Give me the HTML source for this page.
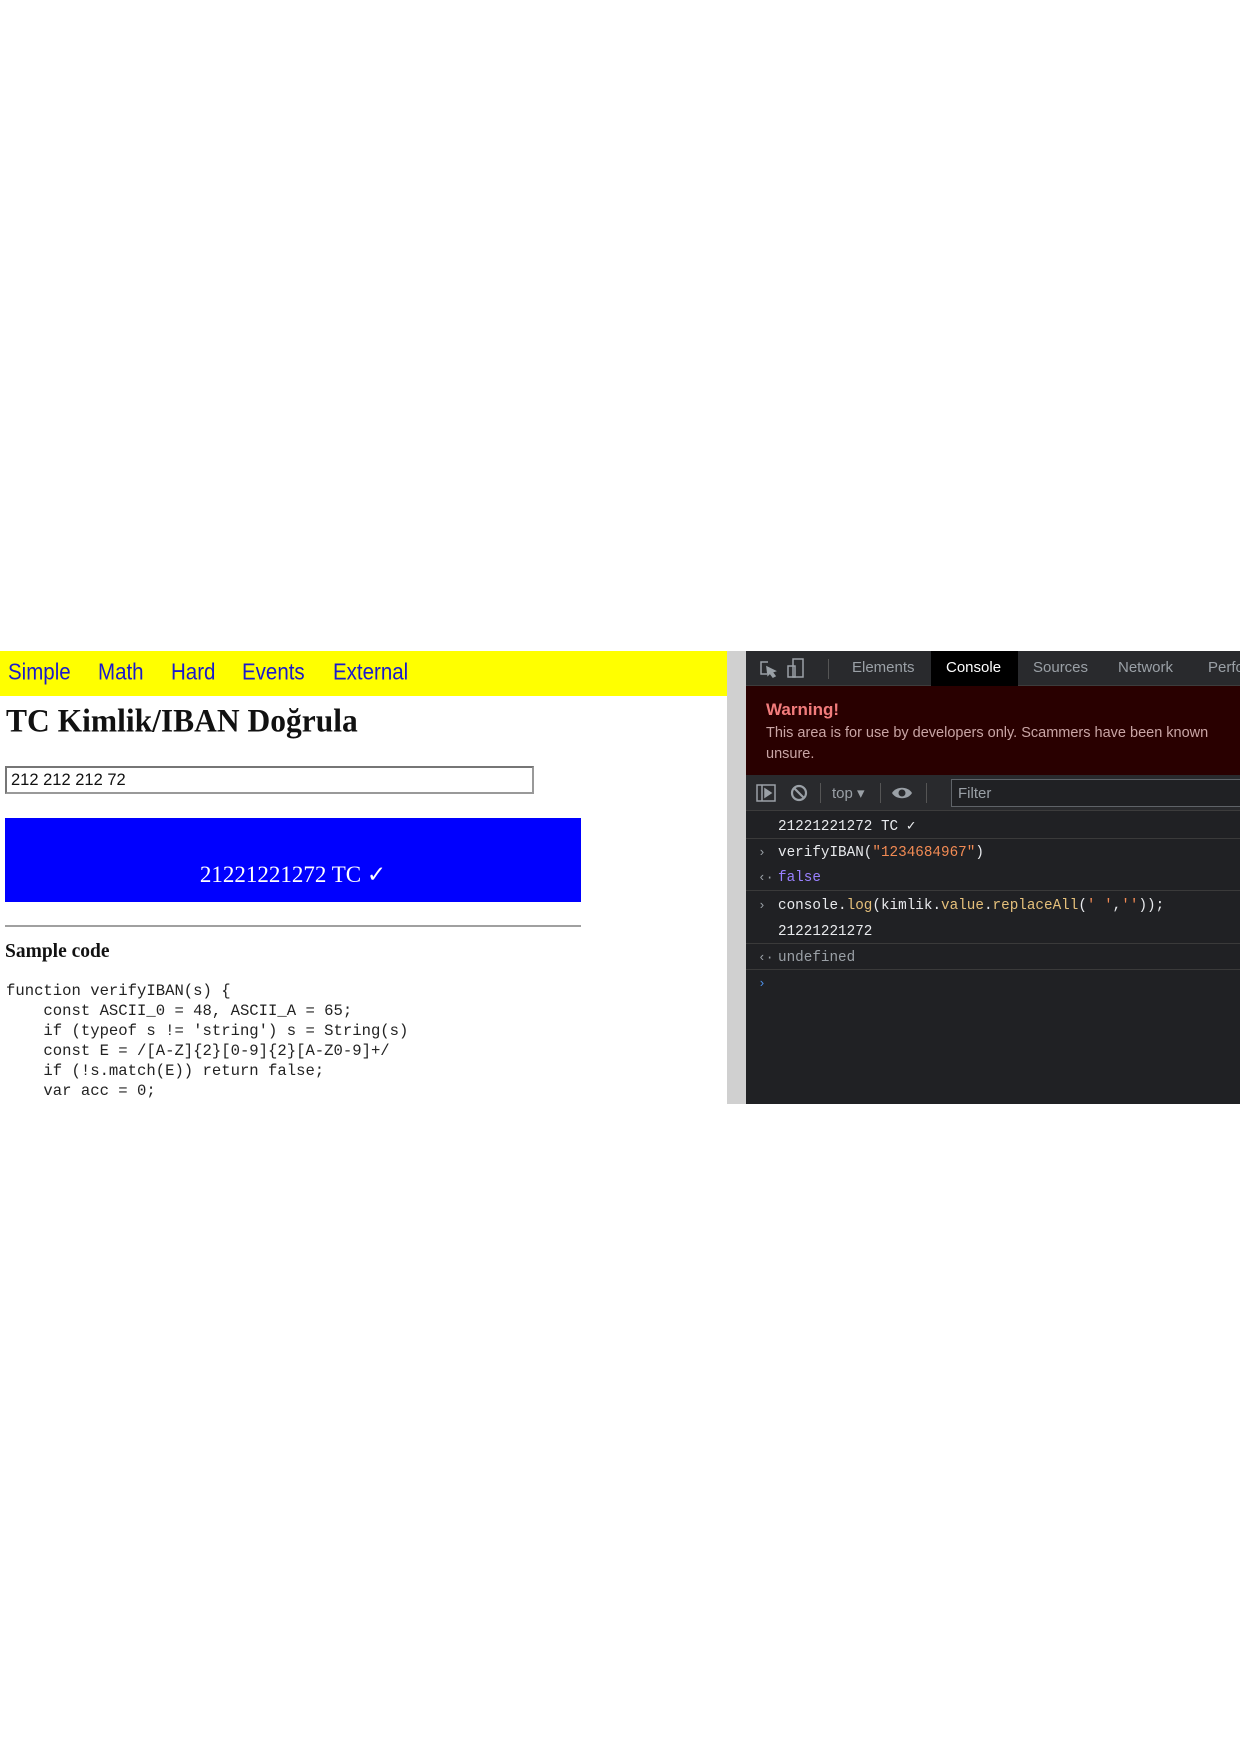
<!DOCTYPE html>
<html><head><meta charset="utf-8"><style>
*{margin:0;padding:0;box-sizing:border-box}
body{width:1240px;height:1755px;background:#fff;position:relative;overflow:hidden;font-family:"Liberation Sans",sans-serif}
.a{position:absolute;white-space:nowrap}
.nav{left:0;top:651px;width:727px;height:45px;background:#ffff00}
.nav span{position:absolute;top:10px;color:#1a1acc;font-size:20.5px;transform:scaleY(1.12)}
.mono{font-family:"Liberation Mono",monospace}
.code{left:6px;top:981px;font-size:15.6px;line-height:20px;color:#222;height:122px;overflow:hidden}
.dt{left:746px;top:651px;width:494px;height:453px;background:#202124;overflow:hidden}
.tabs{position:absolute;left:0;top:0;width:494px;height:35px;background:#292a2d;border-bottom:1px solid #3c3c3c}
.tabs span{position:absolute;top:8px;font-size:15px;color:#9aa0a6}
.warn{position:absolute;left:0;top:35px;width:494px;height:89px;background:#290000}
.tb{position:absolute;left:0;top:124px;width:494px;height:36px;background:#292a2d;border-bottom:1px solid #3c3c3c}
.row{position:absolute;left:0;width:494px;border-bottom:1px solid #3a3a3a;font-size:14.3px;color:#e8eaed}
.row .t{position:absolute;left:32px}
.row .g{position:absolute;left:12px;color:#9aa0a6;font-size:13px}
</style></head><body>
<div class="a nav"><span style="left:8px">Simple</span><span style="left:98px">Math</span><span style="left:171px">Hard</span><span style="left:242px">Events</span><span style="left:333px">External</span></div>
<div class="a" style="left:727px;top:651px;width:19px;height:453px;background:#d0d0d0"></div>
<div class="a" style="left:6px;top:702px;font:bold 31.5px 'Liberation Serif',serif;color:#111;transform:scaleY(1.05);transform-origin:left top">TC Kimlik/IBAN Doğrula</div>
<div class="a" style="left:5px;top:766px;width:529px;height:28px;border:2px solid #767676;border-right-color:#999;border-bottom-color:#999;font-size:16.5px;padding:3px 0 0 4px;color:#111">212 212 212 72</div>
<div class="a" style="left:5px;top:818px;width:576px;height:84px;background:#0000ff;color:#fff;font:23px 'Liberation Serif',serif;text-align:center;padding-top:44px">21221221272 TC ✓</div>
<div class="a" style="left:5px;top:925px;width:576px;height:2px;background:#a0a0a0"></div>
<div class="a" style="left:5px;top:941px;font:bold 19.5px 'Liberation Serif',serif;color:#111">Sample code</div>
<div class="a mono code">function verifyIBAN(s) {
<br>&nbsp;&nbsp;&nbsp;&nbsp;const ASCII_0 = 48, ASCII_A = 65;
<br>&nbsp;&nbsp;&nbsp;&nbsp;if (typeof s != 'string') s = String(s)
<br>&nbsp;&nbsp;&nbsp;&nbsp;const E = /[A-Z]{2}[0-9]{2}[A-Z0-9]+/
<br>&nbsp;&nbsp;&nbsp;&nbsp;if (!s.match(E)) return false;
<br>&nbsp;&nbsp;&nbsp;&nbsp;var acc = 0;
<br>&nbsp;&nbsp;&nbsp;&nbsp;for (let c of s) {</div>
<div class="a dt">
 <div class="tabs">
  <svg style="position:absolute;left:12px;top:8px" width="20" height="20" viewBox="0 0 20 20" fill="none" stroke="#9aa0a6" stroke-width="1.5"><path d="M10 3H3v12h6"/><path d="M9 8l8 4-3 1 3 4-2 1-3-4-2 2z" fill="#9aa0a6"/></svg>
  <svg style="position:absolute;left:40px;top:6px" width="20" height="22" viewBox="0 0 20 22" fill="none" stroke="#9aa0a6" stroke-width="1.5"><rect x="7" y="2" width="10" height="18"/><rect x="2" y="9" width="7" height="11"/></svg>
  <div style="position:absolute;left:82px;top:8px;width:1px;height:20px;background:#555"></div>
  <span style="left:106px">Elements</span>
  <div style="position:absolute;left:185px;top:0;width:87px;height:35px;background:#000"></div>
  <span style="left:200px;color:#fff">Console</span>
  <span style="left:287px">Sources</span>
  <span style="left:372px">Network</span>
  <span style="left:462px">Perfo</span>
 </div>
 <div class="warn">
  <div class="a" style="left:20px;top:14px;font-weight:bold;font-size:17px;color:#f27c7c">Warning!</div>
  <div class="a" style="left:20px;top:39px;font-size:14.5px;color:#c9a5a5">This area is for use by developers only. Scammers have been known</div>
  <div class="a" style="left:20px;top:60px;font-size:14.5px;color:#c9a5a5">unsure.</div>
 </div>
 <div class="tb">
  <svg style="position:absolute;left:10px;top:9px" width="20" height="18" viewBox="0 0 20 18" fill="none" stroke="#9aa0a6" stroke-width="1.5"><rect x="1" y="1" width="18" height="16"/><path d="M6 1v16"/><path d="M9 5l6 4-6 4z" fill="#9aa0a6"/></svg>
  <svg style="position:absolute;left:44px;top:9px" width="18" height="18" viewBox="0 0 18 18" fill="none" stroke="#9aa0a6" stroke-width="2.2"><circle cx="9" cy="9" r="7"/><path d="M4 4l10 10"/></svg>
  <div style="position:absolute;left:74px;top:8px;width:1px;height:20px;background:#555"></div>
  <span class="a" style="left:86px;top:9px;font-size:15px;color:#9aa0a6">top ▾</span>
  <div style="position:absolute;left:134px;top:8px;width:1px;height:20px;background:#555"></div>
  <svg style="position:absolute;left:145px;top:10px" width="22" height="16" viewBox="0 0 22 16"><path d="M1 8C5 1 17 1 21 8C17 15 5 15 1 8z" fill="#9aa0a6"/><circle cx="11" cy="8" r="3.5" fill="#292a2d"/></svg>
  <div style="position:absolute;left:180px;top:8px;width:1px;height:20px;background:#555"></div>
  <div style="position:absolute;left:205px;top:4px;width:300px;height:28px;border:1px solid #5f6368;background:#202124;color:#9aa0a6;font-size:15px;padding:5px 0 0 6px">Filter</div>
 </div>
 <div class="row mono" style="top:161px;height:27px"><span class="t" style="top:6px">21221221272 TC ✓</span></div>
 <div class="row mono" style="top:188px;height:52px"><span class="g" style="top:6px">›</span><span class="t" style="top:6px">verifyIBAN(<span style="color:#f28b54">"1234684967"</span>)</span><span class="g" style="top:31px">‹·</span><span class="t" style="top:31px;color:#9980ff">false</span></div>
 <div class="row mono" style="top:240px;height:53px"><span class="g" style="top:7px">›</span><span class="t" style="top:7px">console.<span style="color:#e5c07b">log</span>(kimlik.<span style="color:#e5c07b">value</span>.<span style="color:#e5c07b">replaceAll</span>(<span style="color:#f28b54">' '</span>,<span style="color:#f28b54">''</span>));</span><span class="t" style="top:33px">21221221272</span></div>
 <div class="row mono" style="top:293px;height:26px"><span class="g" style="top:6px">‹·</span><span class="t" style="top:6px;color:#9aa0a6">undefined</span></div>
 <div class="row mono" style="top:320px;height:24px;border:none"><span class="g" style="top:5px;color:#4d8fe6">›</span></div>
</div>
</body></html>
